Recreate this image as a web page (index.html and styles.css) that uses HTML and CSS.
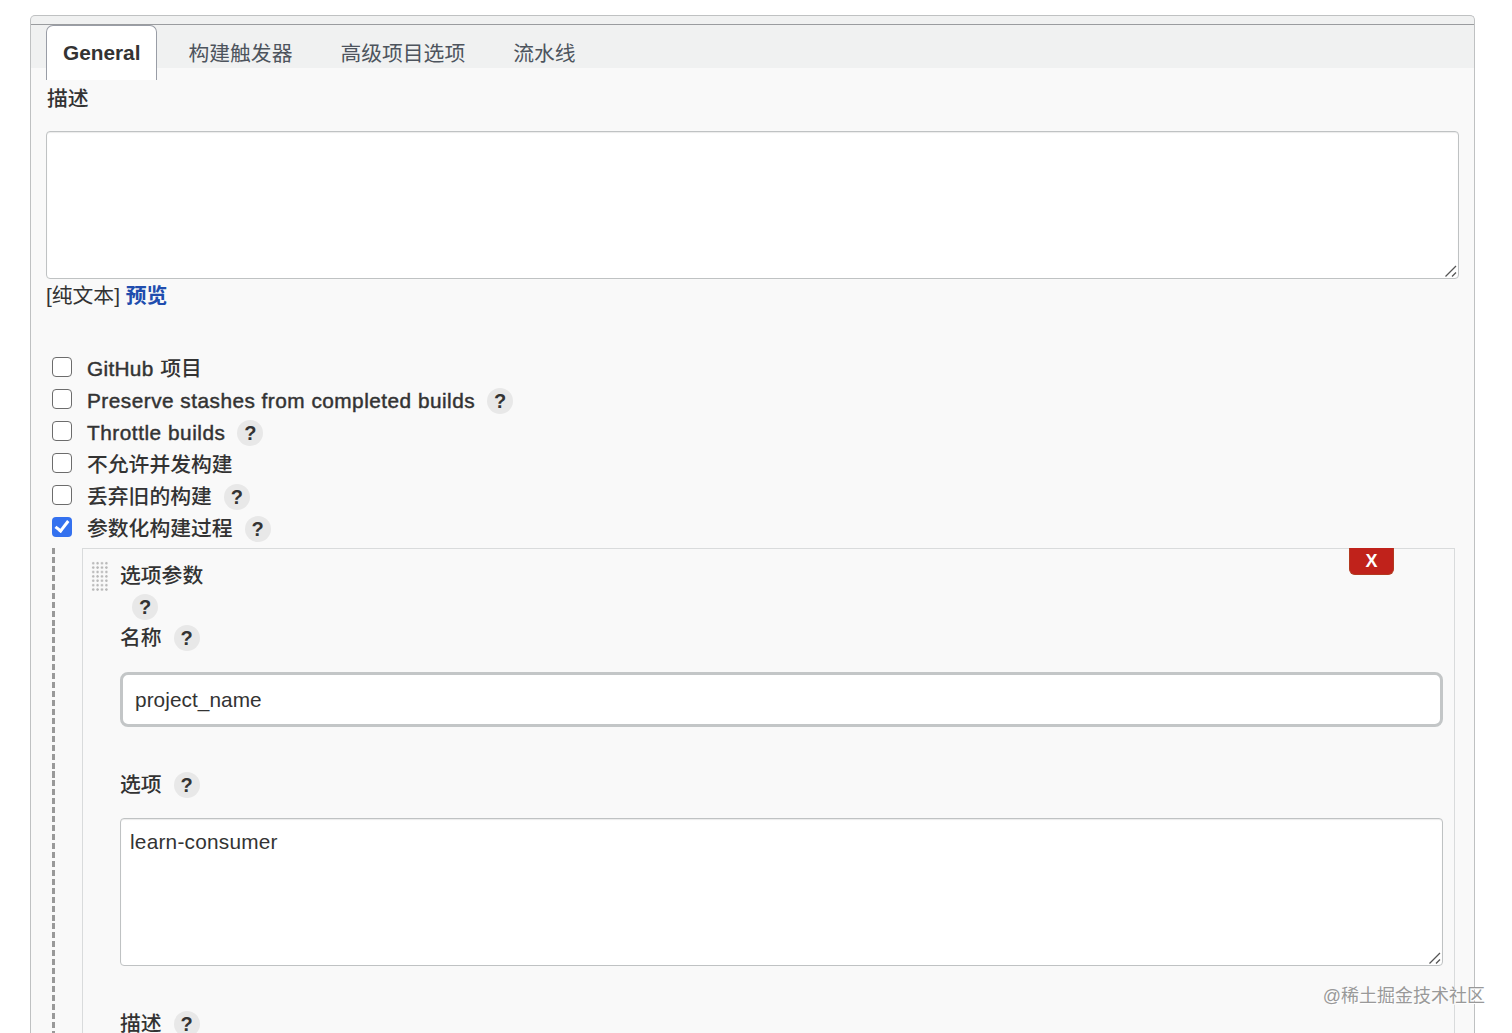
FILE: index.html
```html
<!DOCTYPE html>
<html lang="zh-CN">
<head>
  <meta charset="UTF-8" />
  <meta name="viewport" content="width=device-width, initial-scale=1.0" />
  <title>General</title>
  <link rel="stylesheet" href="styles.css">
</head>
<body>
  <form class="config">
    <nav class="tabs">
      <a class="tab active">General</a>
      <a class="tab">构建触发器</a>
      <a class="tab">高级项目选项</a>
      <a class="tab">流水线</a>
    </nav>

    <div class="section">
      <label class="label" for="description">描述</label>
      <div class="area">
        <textarea id="description"></textarea>
        <svg class="grip" viewBox="0 0 14 14"><path d="M1.5 12.5 12 2M8 12.5 12 8.5"/></svg>
      </div>
      <div class="preview">[纯文本] <a>预览</a></div>

      <div class="options">
        <label class="option"><input type="checkbox"><span class="text github"><span>GitHub</span> 项目</span></label>
        <label class="option"><input type="checkbox"><span class="text preserve">Preserve stashes from completed builds</span><span class="help">?</span></label>
        <label class="option"><input type="checkbox"><span class="text throttle">Throttle builds</span><span class="help">?</span></label>
        <label class="option"><input type="checkbox"><span class="text">不允许并发构建</span></label>
        <label class="option"><input type="checkbox"><span class="text">丢弃旧的构建</span><span class="help">?</span></label>
        <label class="option"><input type="checkbox" checked><span class="text">参数化构建过程</span><span class="help">?</span></label>
      </div>

      <div class="nested">
        <div class="param">
          <button class="delete" type="button">X</button>
          <div class="drag"></div>
          <div class="fields">
            <div class="row title">选项参数</div>
            <div class="row only-help"><span class="help">?</span></div>
            <div class="row">名称<span class="help">?</span></div>
            <input class="name" type="text" value="project_name">
            <div class="row">选项<span class="help">?</span></div>
            <div class="area choices">
              <textarea>learn-consumer</textarea>
              <svg class="grip" viewBox="0 0 14 14"><path d="M1.5 12.5 12 2M8 12.5 12 8.5"/></svg>
            </div>
            <div class="row">描述<span class="help">?</span></div>
          </div>
        </div>
      </div>
    </div>
  </form>

  <div class="watermark">@稀土掘金技术社区</div>
</body>
</html>
```

FILE: styles.css
```css
:root {
  --text-color: #333;
  --border-color: #c3c6c7;
  --panel-bg: #f9f9f9;
  --link-color: #204dae;
}

* {
  box-sizing: border-box;
}

body {
  height: 1033px;
  margin: 0;
  padding: 15px 37.5px 0 30.5px;
  overflow: hidden;
  background: #fff;
  color: var(--text-color);
  font-family: "Liberation Sans", "Noto Sans CJK SC", sans-serif;
  font-size: 20.8px;
  line-height: 32px;
}

.config {
  height: 1018px;
  margin-left: -0.5px;
  padding-top: 8px;
  border: 1px solid #bfc1c2;
  border-bottom: 0;
  border-radius: 5px 5px 0 0;
  background: linear-gradient(#f0f1f1 8px, var(--panel-bg) 8px);
}

.tabs {
  display: flex;
  gap: 16px;
  height: 44px;
  padding: 0 15px;
  border-top: 1px solid #9a9c9f;
  background: #f0f1f1;
}

.tab {
  height: 55px;
  padding: 12px 16px 0;
  color: #4d545d;
  white-space: nowrap;
}

.tab:not(.active) {
  padding-top: 13px;
}

.tab.active {
  margin-right: -1px;
  padding-top: 11px;
  border: 1px solid #999da6;
  border-bottom: 0;
  border-radius: 7px 7px 0 0;
  background: #fff;
  color: var(--text-color);
  font-weight: 700;
}

.section {
  padding: 15px 15px 0;
}

.label {
  display: block;
  height: 48px;
  padding-left: 1px;
  font-weight: 500;
}

.area {
  position: relative;
  height: 148px;
}

.area textarea {
  display: block;
  width: 100%;
  height: 100%;
  padding: 7px 9px;
  border: 1px solid #bfc2c3;
  border-radius: 4px;
  background: #fff;
  box-shadow: inset 0 1px 1px rgba(0, 0, 0, 0.08);
  color: var(--text-color);
  font: inherit;
  resize: none;
}

.grip {
  position: absolute;
  right: 1px;
  bottom: 1px;
  width: 14px;
  height: 14px;
  fill: none;
  stroke: #555;
  stroke-width: 1.3;
}

.preview {
  padding-top: 1px;
}

.preview a {
  color: var(--link-color);
  font-weight: 700;
}

.options {
  margin-top: 41px;
  font-weight: 500;
}

.option {
  display: flex;
  align-items: center;
  height: 32px;
}

.option input {
  appearance: none;
  width: 20px;
  height: 20px;
  margin: -5px 15px 0 6px;
  border: 1px solid #6c6c6c;
  border-radius: 4px;
  background: #fff;
}

.option input:checked {
  border: 0;
  background: #3471ef;
}

.option input:checked::before {
  content: "";
  display: block;
  width: 5px;
  height: 11px;
  margin: 1px 0 0 6px;
  border: solid #fff;
  border-width: 0 3px 3px 0;
  transform: rotate(38deg);
}

/* no medium weight in the latin font */
.github > span,
.preserve,
.throttle {
  font-weight: 400;
  -webkit-text-stroke: 0.45px currentColor;
}

.github > span {
  margin-right: 1px;
  letter-spacing: 0.3px;
}

.preserve {
  letter-spacing: 0.48px;
}

.throttle {
  letter-spacing: 0.52px;
}

.help {
  display: inline-flex;
  align-items: center;
  justify-content: center;
  width: 26px;
  height: 26px;
  margin-left: 12px;
  border-radius: 50%;
  background: #e8e8e8;
  font-size: 20px;
  font-weight: 700;
  line-height: 26px;
}

.nested {
  height: 485px;
  margin: 3px 3.5px 0 6px;
  padding-left: 30px;
  overflow: hidden;
  background: repeating-linear-gradient(#999 0 6px, transparent 6px 8.94px) left top / 3px 100% no-repeat;
}

.param {
  position: relative;
  display: flex;
  height: 485px;
  padding: 0 11px 0 8px;
  border: 1px solid #d9dbdc;
  border-bottom: 0;
}

.drag {
  width: 17px;
  height: 31px;
  margin: 12px 12px 0 0;
  background: radial-gradient(circle, #b8b8b8 1px, transparent 1.4px) 0 0 / 4.4px 4.4px;
}

.fields {
  flex: 1;
}

.row {
  display: flex;
  align-items: center;
  height: 32px;
  font-weight: 500;
}

.title {
  margin-top: 11px;
}

.only-help {
  height: 30px;
}

.name {
  display: block;
  width: 100%;
  height: 55px;
  margin: 18px 0 42px;
  padding: 0 12px;
  border: 3px solid var(--border-color);
  border-radius: 8px;
  background: #fff;
  color: var(--text-color);
  font: inherit;
  letter-spacing: 0.06px;
}

.choices {
  margin: 17px 0 42px;
}

.choices textarea {
  letter-spacing: 0.23px;
}

.delete {
  position: absolute;
  top: -1px;
  right: 60px;
  width: 45px;
  height: 27px;
  padding: 0;
  border: 1px solid #b33a20;
  border-top: 0;
  border-radius: 0 0 6px 6px;
  background: #c0221b;
  color: #fff;
  font: 700 18px/26px "Liberation Sans", sans-serif;
}

.watermark {
  position: absolute;
  top: 980px;
  right: 27px;
  color: #999;
  font-size: 18px;
  text-shadow: 1px 1px 0 #fff;
  white-space: nowrap;
}
```
